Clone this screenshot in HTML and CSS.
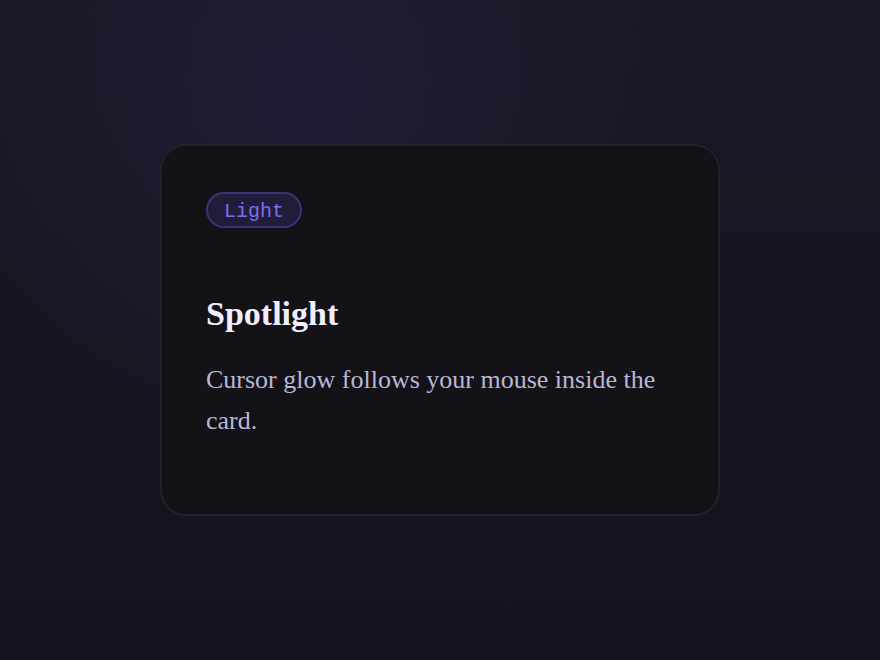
FILE: index.html
```html
<!DOCTYPE html>
<html lang="en">
<head>
<meta charset="utf-8">
<title>Spotlight</title>
<link rel="stylesheet" href="styles.css">
</head>
<body>
  <main class="stage">
    <article class="card">
      <span class="tag">Light</span>
      <h2 class="card-title">Spotlight</h2>
      <p class="card-text">Cursor glow follows your mouse inside the card.</p>
    </article>
  </main>
</body>
</html>
```

FILE: styles.css
```css
html, body {
  margin: 0;
  height: 100%;
}

body {
  background:
    radial-gradient(circle at 35% 15%, rgba(40, 36, 70, 0.5) 0%, rgba(40, 36, 70, 0) 45%),
    linear-gradient(180deg, #181825 0%, #14141d 100%);
  font-family: "Liberation Serif", "Times New Roman", serif;
}

.stage {
  height: 100%;
  display: flex;
  align-items: center;
  justify-content: center;
}

.card {
  box-sizing: border-box;
  width: 560px;
  min-height: 372px;
  padding: 46px 44px;
  background: #121217;
  border: 2px solid #212127;
  border-radius: 26px;
  display: flex;
  flex-direction: column;
  align-items: flex-start;
}

.tag {
  box-sizing: border-box;
  height: 36px;
  padding: 2px 16px 0;
  display: inline-flex;
  align-items: center;
  border: 2px solid #3b3374;
  border-radius: 18px;
  background: #201d3a;
  color: #7b6cf2;
  font-family: Courier, "Nimbus Mono PS", "Courier New", monospace;
  font-size: 20px;
  margin-bottom: 66px;
}

.card-title {
  margin: 0 0 24px;
  font-size: 34px;
  line-height: 1.2;
  font-weight: 700;
  color: #f1eeff;
}

.card-text {
  margin: 0;
  font-size: 26px;
  line-height: 1.6;
  color: #bab6d6;
}
```
